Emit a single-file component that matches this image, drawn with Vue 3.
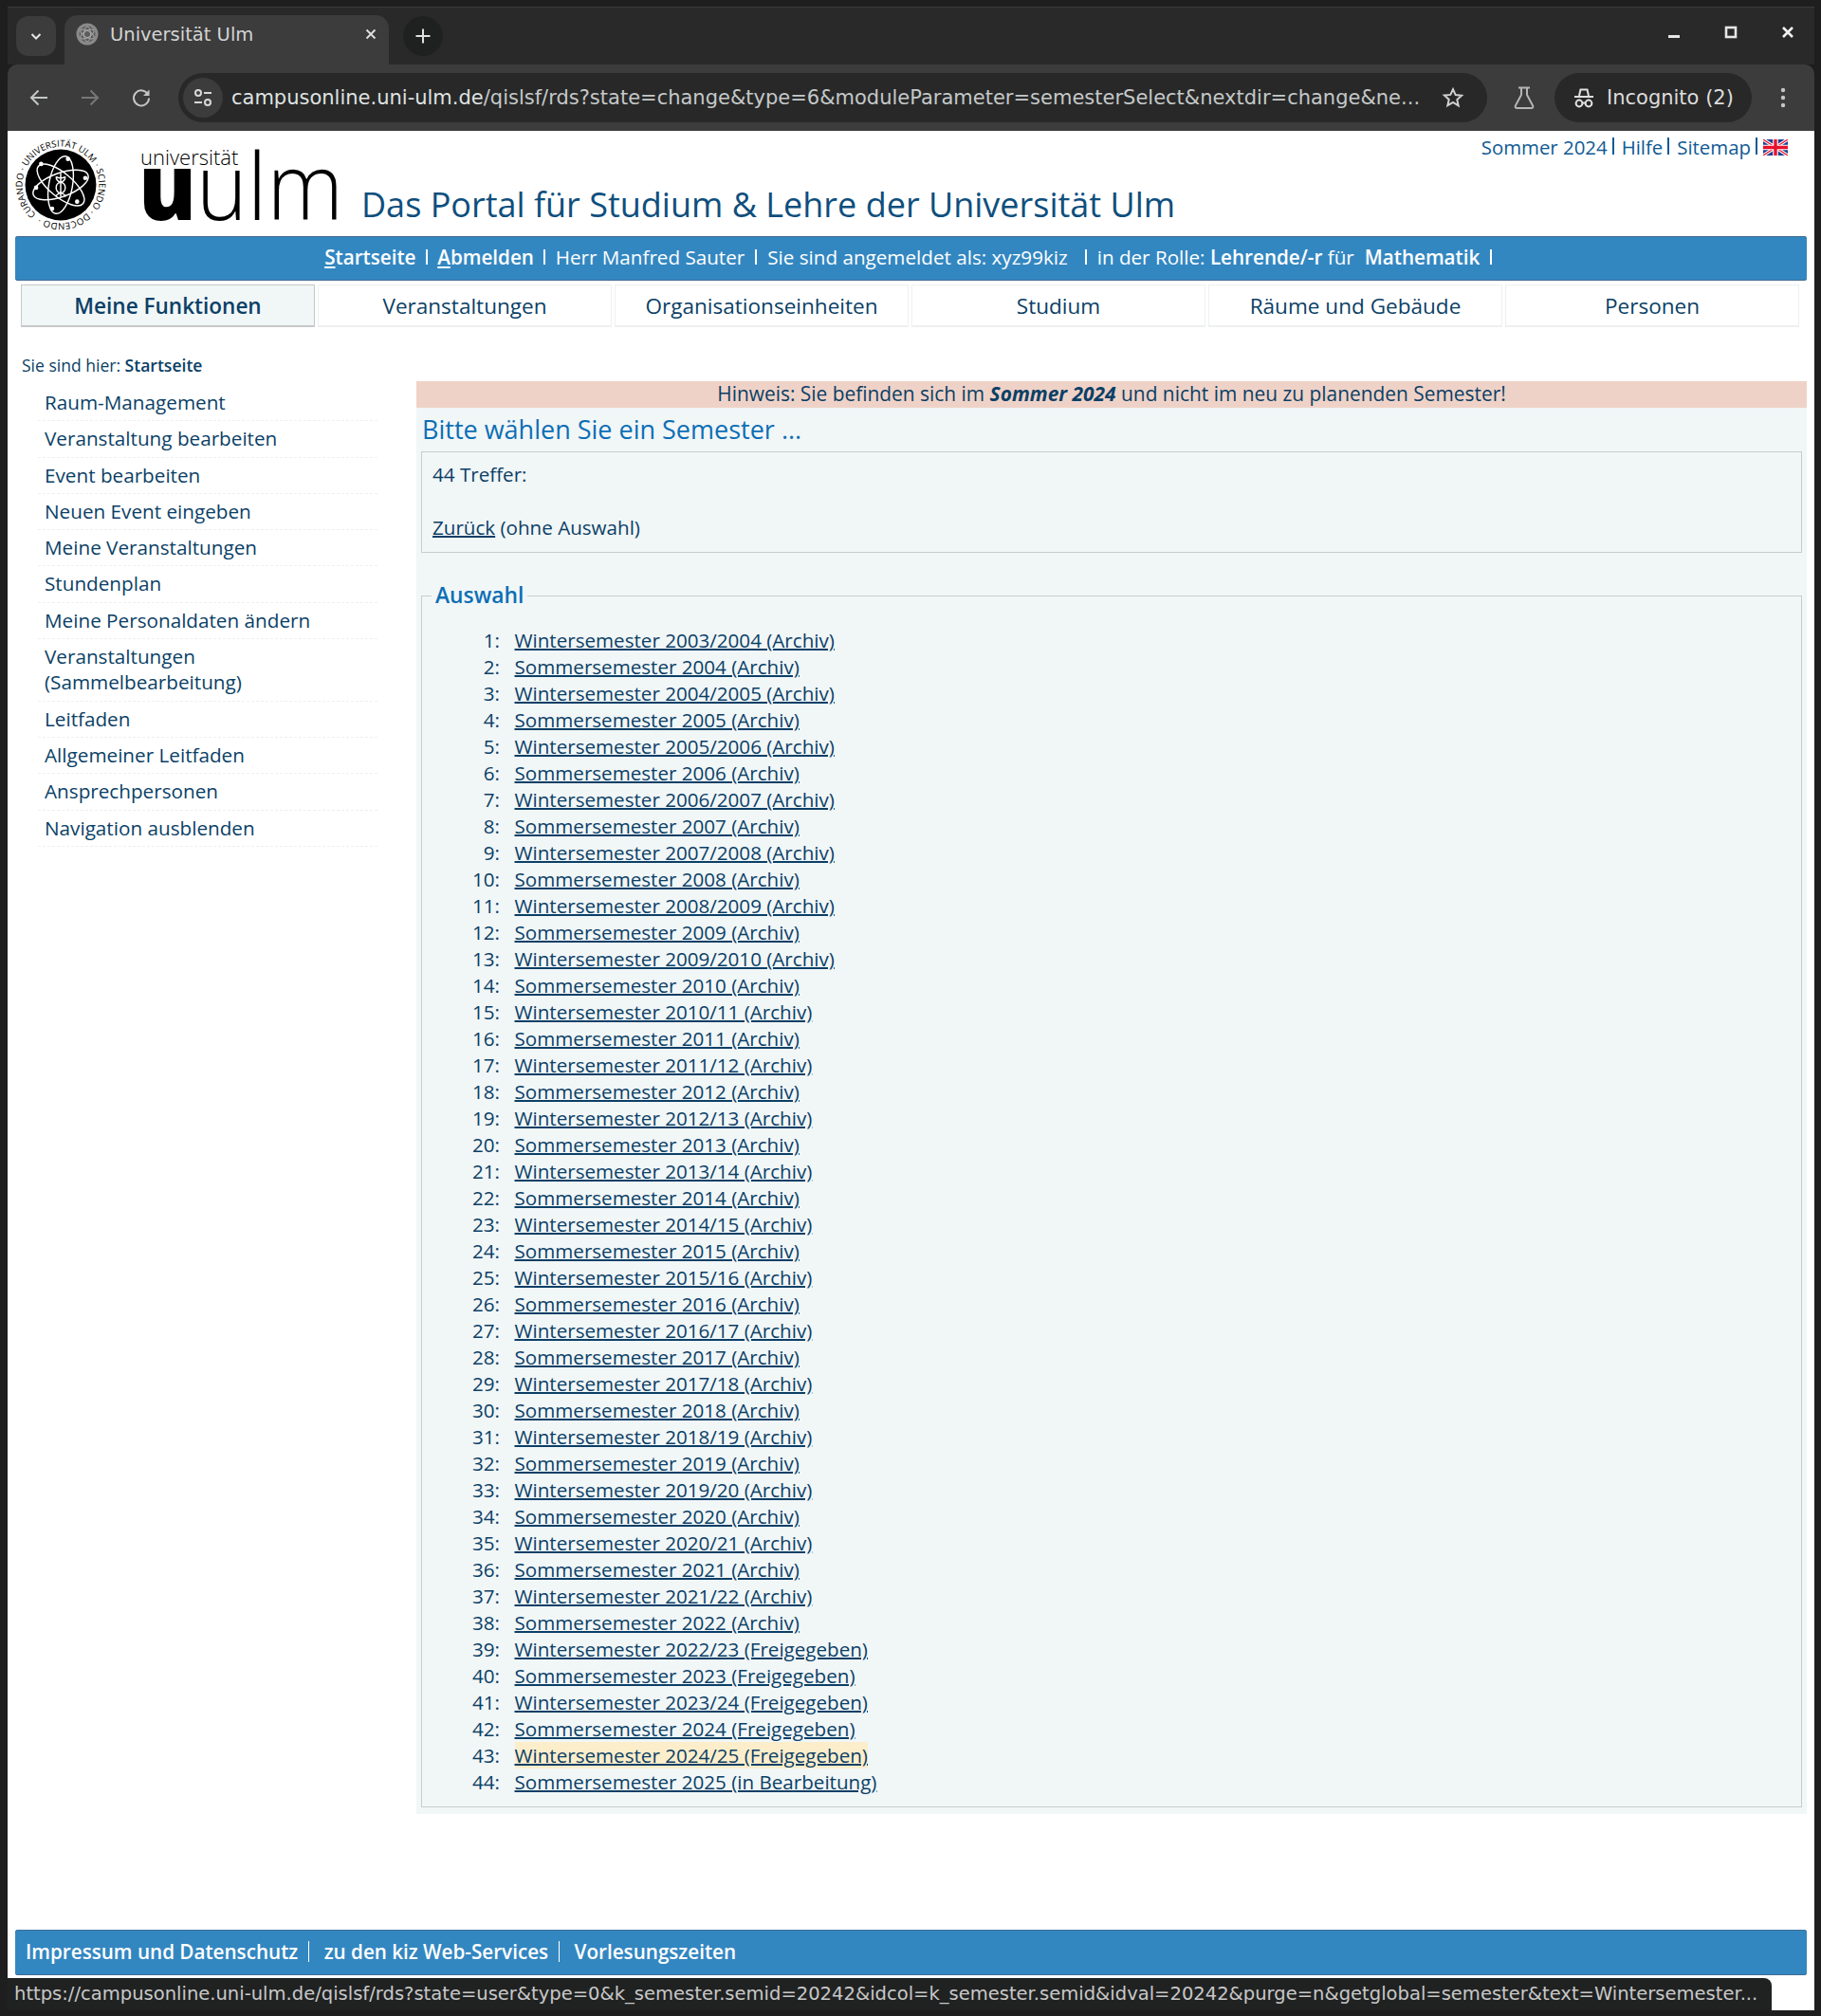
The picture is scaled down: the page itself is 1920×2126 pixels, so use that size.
<script setup>
const menu = [
  'Raum-Management',
  'Veranstaltung bearbeiten',
  'Event bearbeiten',
  'Neuen Event eingeben',
  'Meine Veranstaltungen',
  'Stundenplan',
  'Meine Personaldaten ändern',
  'Veranstaltungen (Sammelbearbeitung)',
  'Leitfaden',
  'Allgemeiner Leitfaden',
  'Ansprechpersonen',
  'Navigation ausblenden',
]

const tabs = ['Meine Funktionen', 'Veranstaltungen', 'Organisationseinheiten', 'Studium', 'Räume und Gebäude', 'Personen']

const semesters = []
for (let i = 0; i < 44; i++) {
  const year = 2003 + Math.floor(i / 2)
  const winter = i % 2 === 0
  let name
  if (winter) {
    const next = year + 1
    name = 'Wintersemester ' + year + '/' + (year >= 2010 ? String(next).slice(2) : next)
  } else {
    name = 'Sommersemester ' + (year + 1)
  }
  let status = 'Archiv'
  if (i >= 38) status = 'Freigegeben'
  if (i === 43) status = 'in Bearbeitung'
  semesters.push({ nr: i + 1, label: name + ' (' + status + ')' })
}
</script>

<template>
  <div class="window">
    <div class="tabstrip">
      <button class="tab-search">
        <svg width="16" height="16" viewBox="0 0 16 16"><path d="M3.5 6 8 10.5 12.5 6" fill="none" stroke="#e6e6e6" stroke-width="2"/></svg>
      </button>
      <div class="tab">
        <svg class="favicon" width="24" height="24" viewBox="0 0 24 24">
          <circle cx="12" cy="12" r="11.5" fill="#8a8a8a"/>
          <circle cx="12" cy="12" r="8.5" fill="#5c5c5c"/>
          <g fill="none" stroke="#a8a8a8" stroke-width="1">
            <ellipse cx="12" cy="12" rx="3.5" ry="8"/>
            <ellipse cx="12" cy="12" rx="3.5" ry="8" transform="rotate(60 12 12)"/>
            <ellipse cx="12" cy="12" rx="3.5" ry="8" transform="rotate(120 12 12)"/>
          </g>
        </svg>
        <span class="tab-title">Universität Ulm</span>
        <svg class="tab-close" width="14" height="14" viewBox="0 0 14 14"><path d="M2.5 2.5 11.5 11.5M11.5 2.5 2.5 11.5" stroke="#e0e0e0" stroke-width="1.8"/></svg>
      </div>
      <button class="new-tab">
        <svg width="20" height="20" viewBox="0 0 20 20"><path d="M10 2.5V17.5M2.5 10H17.5" stroke="#e0e0e0" stroke-width="2"/></svg>
      </button>
      <div class="win-controls">
        <svg width="14" height="14" viewBox="0 0 14 14"><path d="M1 11.5H13" stroke="#e6e6e6" stroke-width="3"/></svg>
        <svg width="14" height="14" viewBox="0 0 14 14"><rect x="2" y="2" width="10" height="10" fill="none" stroke="#e6e6e6" stroke-width="2.6"/></svg>
        <svg width="14" height="14" viewBox="0 0 14 14"><path d="M2 2 12 12M12 2 2 12" stroke="#f0f0f0" stroke-width="2.6"/></svg>
      </div>
    </div>

    <div class="toolbar">
      <div class="nav-buttons">
        <svg width="24" height="24" viewBox="0 0 24 24"><path d="M21 12H4M11.5 4.5 4 12l7.5 7.5" fill="none" stroke="#c4c7c5" stroke-width="2"/></svg>
        <svg width="24" height="24" viewBox="0 0 24 24"><path d="M3 12H20M12.5 4.5 20 12l-7.5 7.5" fill="none" stroke="#777" stroke-width="2"/></svg>
        <svg width="24" height="24" viewBox="0 0 24 24"><path d="M19 8.5A8 8 0 1 0 20 12.5" fill="none" stroke="#c4c7c5" stroke-width="2"/><path d="M20.5 3.5V10H14" fill="#c4c7c5"/></svg>
      </div>
      <div class="address">
        <span class="site-icon">
          <svg width="22" height="22" viewBox="0 0 22 22" fill="none" stroke="#d8d8d8" stroke-width="2"><circle cx="6" cy="6" r="3"/><path d="M12 6H20M2 16H10"/><circle cx="16" cy="16" r="3"/></svg>
        </span>
        <span class="url"><span class="host">campusonline.uni-ulm.de</span>/qislsf/rds?state=change&amp;type=6&amp;moduleParameter=semesterSelect&amp;nextdir=change&amp;ne...</span>
        <svg class="star" width="24" height="24" viewBox="0 0 24 24"><path d="M12 3.2l2.7 5.9 6.4.7-4.8 4.3 1.4 6.3L12 17l-5.7 3.2 1.4-6.3-4.8-4.3 6.4-.7z" fill="none" stroke="#d0d0d0" stroke-width="2"/></svg>
      </div>
      <svg class="flask" width="24" height="26" viewBox="0 0 24 26"><path d="M6 2.5H18M9 2.5V10L2.8 21.5Q2.2 24 4.5 24H19.5Q21.8 24 21.2 21.5L15 10V2.5" fill="none" stroke="#b5b5b5" stroke-width="2"/></svg>
      <div class="incognito">
        <svg width="24" height="24" viewBox="0 0 24 24" fill="none" stroke="#e0e0e0" stroke-width="2"><path d="M7 10 8.5 3.5H15.5L17 10M2 11H22"/><circle cx="7" cy="18" r="3.4"/><circle cx="17" cy="18" r="3.4"/><path d="M10.4 17.5H13.6"/></svg>
        <span>Incognito (2)</span>
      </div>
      <svg class="dots" width="6" height="24" viewBox="0 0 6 24"><circle cx="3" cy="4" r="2.2" fill="#c4c7c5"/><circle cx="3" cy="12" r="2.2" fill="#c4c7c5"/><circle cx="3" cy="20" r="2.2" fill="#c4c7c5"/></svg>
    </div>

    <div class="page">
      <header class="header">
        <svg class="seal" width="96" height="96" viewBox="0 0 100 100">
          <defs>
            <path id="seal-ring" d="M 23 82.2 A 42 42 0 1 1 77 17.8 A 42 42 0 0 1 23 82.2"/>
          </defs>
          <circle cx="50" cy="50" r="39" fill="#000"/>
          <text class="seal-text" textLength="258" lengthAdjust="spacing"><textPath href="#seal-ring">CURANDO · UNIVERSITÄT ULM · SCIENDO · DOCENDO ·</textPath></text>
          <g fill="none" stroke="#fff" stroke-width="1.5" transform="rotate(10 50 50)">
            <ellipse cx="50" cy="50" rx="13" ry="32"/>
            <ellipse cx="50" cy="50" rx="13" ry="32" transform="rotate(60 50 50)"/>
            <ellipse cx="50" cy="50" rx="13" ry="32" transform="rotate(120 50 50)"/>
          </g>
          <path d="M50 37V63M45 41Q50 44 55 41M45 41Q45 46 50 47Q55 48 55 53Q55 58 50 59Q45 60 45 63M55 41Q55 46 50 47Q45 48 45 53Q45 58 50 59Q55 60 55 63" fill="none" stroke="#fff" stroke-width="1.5"/>
          <g fill="#fff">
            <circle cx="58" cy="21.5" r="2.4"/><circle cx="77" cy="42.4" r="2.4"/><circle cx="23" cy="53" r="2.4"/><circle cx="40.6" cy="76" r="2.4"/><circle cx="68" cy="68.4" r="2.4"/><circle cx="28.5" cy="27" r="2.4"/>
          </g>
        </svg>
        <div class="brand">
          <span class="brand-small">universität</span>
          <span class="brand-big"><b>u</b>ulm</span>
        </div>
        <h1 class="portal">Das Portal für Studium &amp; Lehre der Universität Ulm</h1>
        <div class="meta">
          <a>Sommer 2024</a><i class="sep"></i><a>Hilfe</a><i class="sep"></i><a>Sitemap</a><i class="sep"></i>
          <svg class="flag" width="26" height="17" viewBox="0 0 26 17">
            <rect width="26" height="17" fill="#1f3f8f"/>
            <path d="M0 0 26 17M26 0 0 17" stroke="#fff" stroke-width="3.4"/>
            <path d="M0 0 26 17M26 0 0 17" stroke="#e8112d" stroke-width="1.2"/>
            <path d="M13 0V17M0 8.5H26" stroke="#fff" stroke-width="5.6"/>
            <path d="M13 0V17M0 8.5H26" stroke="#e8112d" stroke-width="3.4"/>
          </svg>
        </div>
      </header>

      <nav class="bar topbar">
        <a class="strong"><u>S</u>tartseite</a><i class="bar-sep first"></i>
        <a class="strong"><u>A</u>bmelden</a><i class="bar-sep first"></i>
        <span>Herr Manfred Sauter</span><i class="bar-sep"></i>
        <span>Sie sind angemeldet als: xyz99kiz</span><i class="bar-sep wide"></i>
        <span>in der Rolle: <b>Lehrende/-r</b> für</span><b class="faculty">Mathematik</b><i class="bar-sep"></i>
      </nav>

      <div class="tabs">
        <a v-for="(tab, i) in tabs" :key="tab" class="main-tab" :class="{ active: i === 0 }">{{ tab }}</a>
      </div>

      <div class="columns">
        <aside class="sidebar">
          <div class="crumb">Sie sind hier: <b>Startseite</b></div>
          <ul class="menu">
            <li v-for="item in menu" :key="item">{{ item }}</li>
          </ul>
        </aside>

        <main class="content">
          <div class="notice">Hinweis: Sie befinden sich im <b><i>Sommer 2024</i></b> und nicht im neu zu planenden Semester!</div>
          <h2 class="title">Bitte wählen Sie ein Semester ...</h2>
          <div class="hits">
            <div>44 Treffer:</div>
            <div class="back"><a>Zurück</a> (ohne Auswahl)</div>
          </div>
          <fieldset class="choice">
            <legend>Auswahl</legend>
            <div v-for="s in semesters" :key="s.nr" class="row">
              <span class="nr">{{ s.nr }}:</span>
              <a class="sem" :class="{ hover: s.nr === 43 }">{{ s.label }}</a>
            </div>
          </fieldset>
        </main>
      </div>

      <footer class="bar footbar">
        <a>Impressum und Datenschutz</a><i class="foot-sep"></i>
        <a>zu den kiz Web-Services</a><i class="foot-sep"></i>
        <a>Vorlesungszeiten</a>
      </footer>
    </div>

    <div class="status">https://campusonline.uni-ulm.de/qislsf/rds?state=user&amp;type=0&amp;k_semester.semid=20242&amp;idcol=k_semester.semid&amp;idval=20242&amp;purge=n&amp;getglobal=semester&amp;text=Wintersemester...</div>
  </div>
</template>

<style>
body {
  background: #1e1e1e;
}
</style>

<style scoped>
.window {
  position: relative;
  width: 1920px;
  height: 2126px;
  display: flex;
  flex-direction: column;
  background: #1e1e1e;
  font-family: "Open Sans", sans-serif;
  color: #0b3f66;
  overflow: hidden;
}

.tabstrip {
  height: 60px;
  margin: 7px 7px 0 8px;
  border-top: 1px solid #3a3a3a;
  display: flex;
  align-items: flex-end;
  padding-left: 9px;
  background: #292929;
  flex-shrink: 0;
}

.tab-search {
  width: 42px;
  height: 42px;
  margin-bottom: 9px;
  border: none;
  border-radius: 13px;
  background: #3c3c3c;
  display: flex;
  align-items: center;
  justify-content: center;
  padding: 0;
}

.tab {
  width: 342px;
  height: 52px;
  margin-left: 9px;
  padding: 0 12px 12px 12px;
  box-sizing: border-box;
  display: flex;
  align-items: center;
  background: #3c3c3c;
  border-radius: 14px 14px 0 0;
}

.favicon {
  flex-shrink: 0;
}

.tab-title {
  margin-left: 12px;
  color: #d4d4d4;
  font-family: "DejaVu Sans", sans-serif;
  font-size: 19.5px;
}

.tab-close {
  margin-left: auto;
}

.new-tab {
  width: 42px;
  height: 42px;
  margin: 0 0 9px 15px;
  border: none;
  border-radius: 50%;
  background: #1f2121;
  display: flex;
  align-items: center;
  justify-content: center;
  padding: 0;
}

.win-controls {
  margin-left: auto;
  align-self: flex-start;
  display: flex;
  gap: 46px;
  padding: 19px 21px 0 0;
}

.toolbar {
  height: 70px;
  margin: 0 7px 0 8px;
  padding: 0 0 0 21px;
  display: flex;
  align-items: center;
  background: #3c3c3c;
  border-radius: 10px 10px 0 0;
  flex-shrink: 0;
}

.nav-buttons {
  display: flex;
  gap: 30px;
}

.address {
  width: 1380px;
  height: 52px;
  margin-left: 27px;
  padding: 0 24px 0 5px;
  box-sizing: border-box;
  display: flex;
  align-items: center;
  background: #282828;
  border-radius: 26px;
}

.site-icon {
  width: 42px;
  height: 42px;
  border-radius: 50%;
  background: #3c3c3c;
  display: flex;
  align-items: center;
  justify-content: center;
  flex-shrink: 0;
}

.url {
  margin-left: 9px;
  color: #c4c8c8;
  font-family: "DejaVu Sans", sans-serif;
  font-size: 21px;
  white-space: nowrap;
}

.host {
  color: #dfe2e2;
}

.star {
  margin-left: auto;
  flex-shrink: 0;
}

.flask {
  margin-left: 27px;
  flex-shrink: 0;
}

.incognito {
  width: 208px;
  height: 52px;
  margin-left: 20px;
  padding-left: 19px;
  box-sizing: border-box;
  display: flex;
  align-items: center;
  gap: 12px;
  background: #282828;
  border-radius: 26px;
  color: #dcdcdc;
  font-family: "DejaVu Sans", sans-serif;
  font-size: 21px;
}

.dots {
  margin-left: 30px;
}

.page {
  flex: 1;
  margin: 0 7px 6px 8px;
  padding: 0 8px;
  display: flex;
  flex-direction: column;
  background: #fff;
  min-height: 0;
}

.header {
  height: 111px;
  display: flex;
  align-items: flex-end;
  flex-shrink: 0;
}

.seal {
  align-self: flex-start;
  margin-top: 9px;
  flex-shrink: 0;
}

.seal-text {
  font-family: "Open Sans", sans-serif;
  font-size: 10px;
  font-weight: 500;
  fill: #000;
}

.brand {
  width: 233px;
  margin-left: 36px;
  position: relative;
  height: 100%;
  flex-shrink: 0;
  color: #000;
}

.brand-small {
  position: absolute;
  left: 0;
  top: 17px;
  font-size: 22px;
  font-weight: 300;
  line-height: 20px;
}

.brand-big {
  position: absolute;
  left: -2px;
  top: 37px;
  font-size: 98px;
  font-weight: 300;
  line-height: 38px;
  transform: scaleX(0.93);
  transform-origin: left center;
  white-space: nowrap;
}

.brand-big b {
  font-weight: 800;
}

.portal {
  margin: 0 0 8px 0;
  font-size: 36px;
  font-weight: 400;
  line-height: 50px;
  color: #0f4f7d;
  white-space: nowrap;
}

.meta {
  align-self: flex-start;
  margin: 4px 20px 0 auto;
  display: flex;
  align-items: center;
  font-size: 20.4px;
  line-height: 27px;
  color: #0f5a94;
}

.sep {
  width: 2px;
  height: 18px;
  margin: 0 8px 4px 5px;
  background: #0f5a94;
}

.flag {
  margin-left: -2px;
}

.bar {
  background: #3387c1;
  color: #fff;
  font-size: 20.65px;
  border-radius: 3px;
  box-shadow: inset 0 1px 0 #3f6b94, inset 0 -1px 0 #3f6b94;
  flex-shrink: 0;
}

.topbar {
  height: 47px;
  padding: 0 0 4px 5.5px;
  box-sizing: border-box;
  display: flex;
  align-items: center;
  justify-content: center;
}

.strong,
.faculty,
.topbar b {
  font-weight: 600;
}

.faculty {
  margin-left: 11px;
}

.bar-sep {
  width: 2px;
  height: 16px;
  margin: 0 11px;
  background: #fff;
}

.bar-sep.first {
  margin: 0 10.4px;
}

.bar-sep.wide {
  margin: 0 11px 0 18px;
}

.tabs {
  margin: 4px 0 0 6px;
  display: flex;
  gap: 3px;
  flex-shrink: 0;
}

.main-tab {
  width: 310px;
  height: 45px;
  box-sizing: border-box;
  display: flex;
  align-items: center;
  justify-content: center;
  border: 1px solid #eef0f0;
  border-width: 1px 1px 2px 1px;
  font-size: 22.55px;
  background: #fff;
}

.main-tab.active {
  background: #f1f6f7;
  border-color: #c8c8c8;
  font-weight: 600;
}

.columns {
  display: flex;
  flex: 1;
  min-height: 0;
}

.sidebar {
  width: 423px;
  flex-shrink: 0;
  padding-top: 28px;
}

.crumb {
  margin-left: 7px;
  font-size: 17.55px;
  line-height: 24px;
}

.crumb b {
  font-weight: 600;
}

.menu {
  list-style: none;
  margin: 9px 0 0 24px;
  padding: 0;
  width: 358px;
  font-size: 20.7px;
  line-height: 27.3px;
}

.menu li {
  padding: 5px 40px 5px 7px;
  border-bottom: 1px dashed #eef0f0;
}

.content {
  flex: 1;
  align-self: flex-start;
  margin-top: 57px;
  padding-bottom: 7px;
  background: #f1f6f7;
  min-width: 0;
}

.notice {
  height: 28px;
  background: #efd2c7;
  text-align: center;
  font-size: 20.9px;
  line-height: 27px;
}

.title {
  margin: 4px 0 4px 6px;
  font-size: 27px;
  font-weight: 400;
  line-height: 38px;
  color: #0c6eb5;
}

.hits {
  margin: 0 5px 0 5px;
  height: 107px;
  padding: 9px 11px;
  box-sizing: border-box;
  border: 1px solid #c8cccc;
  font-size: 20.6px;
  line-height: 28px;
}

.back {
  margin-top: 27.5px;
}

.back a {
  text-decoration: underline;
  text-decoration-thickness: 2px;
}

.choice {
  margin: 29px 5px 0 5px;
  padding: 17px 0 12px 0;
  min-width: 0;
  border: 1px solid #c8cccc;
  font-size: 20.6px;
  line-height: 28px;
}

.choice legend {
  margin-left: 10px;
  padding: 0 4px;
  font-size: 22.8px;
  font-weight: 600;
  line-height: 32px;
  color: #0c6eb5;
}

.row {
  display: flex;
}

.nr {
  width: 82px;
  text-align: right;
  flex-shrink: 0;
}

.sem {
  margin-left: 15.5px;
  text-decoration: underline;
  text-decoration-thickness: 2px;
}

.sem.hover {
  background: #fdeecb;
}

.footbar {
  height: 48px;
  margin-top: auto;
  margin-bottom: 37px;
  padding: 0 0 2px 11px;
  box-sizing: border-box;
  display: flex;
  align-items: center;
  font-weight: 600;
}

.foot-sep {
  width: 1px;
  height: 22px;
  margin: 0 16px 0 10.5px;
  background: #fff;
}

.status {
  position: absolute;
  left: 8px;
  bottom: 6px;
  width: 1860px;
  height: 34px;
  padding: 0 12px 0 7px;
  box-sizing: border-box;
  background: #202222;
  border-radius: 0 8px 0 0;
  color: #c8c8c8;
  font-family: "DejaVu Sans", sans-serif;
  font-size: 19.55px;
  line-height: 34px;
  white-space: nowrap;
  overflow: hidden;
}
</style>
